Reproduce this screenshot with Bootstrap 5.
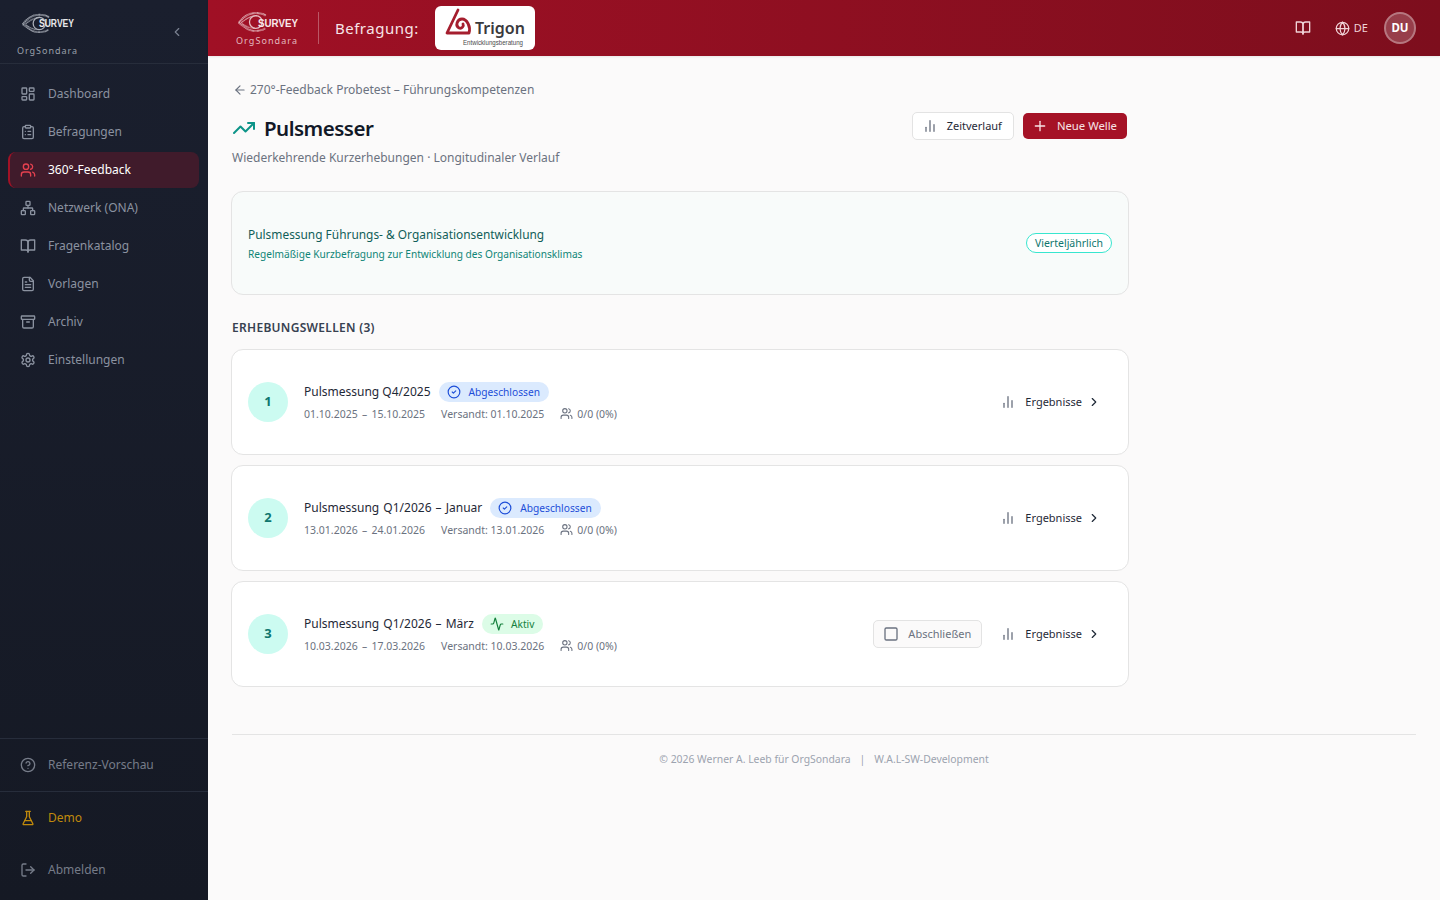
<!DOCTYPE html>
<html lang="de">
<head>
  <meta charset="UTF-8">
  <meta name="viewport" content="width=device-width, initial-scale=1.0">
  <title>Pulsmesser</title>
  <link rel="stylesheet" href="https://cdn.jsdelivr.net/npm/bootstrap@5.3.0/dist/css/bootstrap.min.css">
  <style>
    html, body { height: 100%; }
    body { font-family: "Noto Sans", "Liberation Sans", sans-serif; background: #fbfafa; color: #111827; font-size: 12px; overflow: hidden; }
    .ic { fill: none; stroke: currentColor; stroke-width: 2; stroke-linecap: round; stroke-linejoin: round; flex: none; }
    .app { height: 900px; }

    .sidebar { width: 208px; flex: none; background: linear-gradient(180deg, #1a1f2e, #151924); color: #8b92a0; }
    .side-top { height: 64px; border-bottom: 1px solid #272d3b; padding: 10px 24px 0 16px; }
    .side-top .ic { color: #7a8190; margin-top: 15px; }
    .side-nav { padding: 12px 8px 0; gap: 2px; }
    .side-link { height: 36px; display: flex; align-items: center; gap: 12px; padding: 0 12px; margin-right: 1px; border-radius: 8px; color: #8b92a0; text-decoration: none; font-size: 12px; }
    .side-link.active { background: #401b2b; color: #fff; border-left: 2px solid #a11226; padding-left: 10px; }
    .side-link.active .ic { color: #e5414f; }
    .side-sec { border-top: 1px solid #272d3b; height: 53px; padding: 8px 8px; }
    .side-foot { height: 109px; padding: 8px 8px 0; }
    .side-foot .side-link { height: 36px; margin-bottom: 16px; }
    .side-link.demo { color: #c08a0c; }
    .side-link.muted { color: #767c89; }

    .topbar { height: 56px; background: linear-gradient(90deg, #a01025, #7d0e1d); color: #fff; padding: 0 24px 0 28px; box-shadow: 0 1px 2px rgba(0,0,0,.08); }
    .top-div { width: 1px; height: 32px; background: rgba(255,255,255,.3); margin: 0 16px 0 10px; }
    .top-label { font-size: 15px; letter-spacing: .5px; color: #f6e4e7; margin-right: 16px; }
    .trigon { width: 100px; height: 44px; background: #fff; border-radius: 6px; }
    .top-right { color: #f0d3d7; }
    .lang { font-size: 11px; margin-left: 4px; margin-right: 16px; }
    .avatar { width: 32px; height: 32px; border-radius: 50%; background: rgba(255,255,255,.2); border: 2px solid rgba(255,255,255,.3); font-size: 11.5px; font-weight: 700; color: #fff; }

    .page { padding: 25px 24px 24px; }
    .content { width: 898px; margin-left: -1px; }
    .crumb { color: #6b7280; font-size: 12px; line-height: 18px; padding-left: 2px; gap: 3px; }
    .head { margin-top: 14px; padding-left: 1px; height: 59px; }
    .head h1 { font-size: 20.5px; font-weight: 600; line-height: 30px; margin: 0; color: #111827; letter-spacing: -.5px; }
    .head .teal { color: #0d9488; }
    .head-btns { margin-top: -1px; }
    .sub { color: #6b7280; font-size: 12px; line-height: 18px; margin-top: 6px; }
    .btn-z, .btn-n, .btn-a { display: inline-flex; align-items: center; font-size: 11px; border-radius: 5px; }
    .btn-z { height: 28px; padding: 0 11px 0 9px; gap: 9px; background: #fff; border: 1px solid #e3e3e3; color: #1f2937; }
    .btn-z .ic { color: #6b7280; }
    .btn-n { height: 26px; padding: 0 10px 0 9px; gap: 9px; background: #a51226; border: 0; color: #f8e3e6; margin: 0 2px 0 1px; font-size: 11.3px; }
    .intro { height: 104px; margin-top: 19px; background: #f8fbfa; border: 1px solid #e4e4e4; border-radius: 12px; padding: 0 16px; }
    .intro-t { color: #115e59; font-size: 11.9px; line-height: 18px; padding-top: 1px; }
    .intro-s { color: #0f8577; font-size: 10.15px; line-height: 16px; margin-top: 3px; }
    .tag { border: 1px solid #38e6cf; color: #0f766e; background: #fff; border-radius: 999px; font-size: 10.5px; line-height: 16px; padding: 1px 8px; }
    .sec-title { color: #374151; font-size: 12px; font-weight: 600; line-height: 18px; margin: 24px 0 12px 1px; letter-spacing: .3px; }
    .waves { gap: 10px; }
    .wave { height: 106px; background: #fff; border: 1px solid #e4e4e4; border-radius: 12px; padding: 0 16px; gap: 16px; }
    .num { width: 40px; height: 40px; border-radius: 50%; background: #ccfbf1; color: #0f766e; font-weight: 700; font-size: 13px; flex: none; }
    .w-title { color: #1f2937; font-size: 12px; line-height: 18px; }
    .w-dash { word-spacing: 1px; }
    .pill { border-radius: 999px; font-size: 10.2px; line-height: 14px; padding: 3px 9px 3px 8px; gap: 7px; display: inline-flex; align-items: center; }
    .pill.done { background: #dbeafe; color: #1d4ed8; gap: 8px; }
    .pill.live { background: #dcfce7; color: #15803d; }
    .w-meta { color: #6b7280; font-size: 10.5px; line-height: 14px; margin: 5px 0 2px; gap: 16px; }
    .w-date { word-spacing: 1.5px; }
    .btn-a { height: 28px; padding: 0 10px 0 9px; gap: 9px; background: #fbfafa; border: 1px solid #e3e3e3; color: #6b7280; margin-right: -8px; }
    .btn-r { display: inline-flex; align-items: center; font-size: 11px; color: #1f2937; height: 28px; padding: 0 11px 0 10px; }
    .btn-r .bars { color: #6b7280; margin-right: 9px; }
    .btn-r .chev { margin-left: 5px; }
    .foot { margin-top: 47px; border-top: 1px solid #e4e4e4; padding-top: 16px; color: #9ca3af; font-size: 10.4px; line-height: 16px; gap: 9px; }
  </style>
</head>
<body>
  <svg class="d-none" xmlns="http://www.w3.org/2000/svg">
    <symbol id="i-dash" viewBox="0 0 24 24"><rect x="3" y="3" width="7" height="9" rx="1"/><rect x="14" y="3" width="7" height="5" rx="1"/><rect x="14" y="12" width="7" height="9" rx="1"/><rect x="3" y="16" width="7" height="5" rx="1"/></symbol>
    <symbol id="i-clip" viewBox="0 0 24 24"><rect x="8" y="2" width="8" height="4" rx="1"/><path d="M16 4h2a2 2 0 0 1 2 2v14a2 2 0 0 1-2 2H6a2 2 0 0 1-2-2V6a2 2 0 0 1 2-2h2"/><path d="M12 11h4"/><path d="M12 16h4"/><path d="M8 11h.01"/><path d="M8 16h.01"/></symbol>
    <symbol id="i-users" viewBox="0 0 24 24"><path d="M16 21v-2a4 4 0 0 0-4-4H6a4 4 0 0 0-4 4v2"/><circle cx="9" cy="7" r="4"/><path d="M22 21v-2a4 4 0 0 0-3-3.87"/><path d="M16 3.13a4 4 0 0 1 0 7.75"/></symbol>
    <symbol id="i-net" viewBox="0 0 24 24"><rect x="16" y="16" width="6" height="6" rx="1"/><rect x="2" y="16" width="6" height="6" rx="1"/><rect x="9" y="2" width="6" height="6" rx="1"/><path d="M5 16v-3a1 1 0 0 1 1-1h12a1 1 0 0 1 1 1v3"/><path d="M12 12V8"/></symbol>
    <symbol id="i-book" viewBox="0 0 24 24"><path d="M2 3h6a4 4 0 0 1 4 4v14a3 3 0 0 0-3-3H2z"/><path d="M22 3h-6a4 4 0 0 0-4 4v14a3 3 0 0 1 3-3h7z"/></symbol>
    <symbol id="i-file" viewBox="0 0 24 24"><path d="M15 2H6a2 2 0 0 0-2 2v16a2 2 0 0 0 2 2h12a2 2 0 0 0 2-2V7Z"/><path d="M14 2v4a2 2 0 0 0 2 2h4"/><path d="M10 9H8"/><path d="M16 13H8"/><path d="M16 17H8"/></symbol>
    <symbol id="i-arch" viewBox="0 0 24 24"><rect x="2" y="3" width="20" height="5" rx="1"/><path d="M4 8v11a2 2 0 0 0 2 2h12a2 2 0 0 0 2-2V8"/><path d="M10 12h4"/></symbol>
    <symbol id="i-gear" viewBox="0 0 24 24"><path d="M12.22 2h-.44a2 2 0 0 0-2 2v.18a2 2 0 0 1-1 1.73l-.43.25a2 2 0 0 1-2 0l-.15-.08a2 2 0 0 0-2.73.73l-.22.38a2 2 0 0 0 .73 2.73l.15.1a2 2 0 0 1 1 1.72v.51a2 2 0 0 1-1 1.74l-.15.09a2 2 0 0 0-.73 2.73l.22.38a2 2 0 0 0 2.73.73l.15-.08a2 2 0 0 1 2 0l.43.25a2 2 0 0 1 1 1.73V20a2 2 0 0 0 2 2h.44a2 2 0 0 0 2-2v-.18a2 2 0 0 1 1-1.73l.43-.25a2 2 0 0 1 2 0l.15.08a2 2 0 0 0 2.73-.73l.22-.39a2 2 0 0 0-.73-2.73l-.15-.08a2 2 0 0 1-1-1.74v-.5a2 2 0 0 1 1-1.74l.15-.09a2 2 0 0 0 .73-2.73l-.22-.38a2 2 0 0 0-2.73-.73l-.15.08a2 2 0 0 1-2 0l-.43-.25a2 2 0 0 1-1-1.73V4a2 2 0 0 0-2-2z"/><circle cx="12" cy="12" r="3"/></symbol>
    <symbol id="i-help" viewBox="0 0 24 24"><circle cx="12" cy="12" r="10"/><path d="M9.09 9a3 3 0 0 1 5.83 1c0 2-3 3-3 3"/><path d="M12 17h.01"/></symbol>
    <symbol id="i-flask" viewBox="0 0 24 24"><path d="M10 2v7.527a2 2 0 0 1-.211.896L4.72 20.55a1 1 0 0 0 .9 1.45h12.76a1 1 0 0 0 .9-1.45l-5.069-10.127A2 2 0 0 1 14 9.527V2"/><path d="M8.5 2h7"/><path d="M7 16h10"/></symbol>
    <symbol id="i-out" viewBox="0 0 24 24"><path d="M9 21H5a2 2 0 0 1-2-2V5a2 2 0 0 1 2-2h4"/><path d="m16 17 5-5-5-5"/><path d="M21 12H9"/></symbol>
    <symbol id="i-globe" viewBox="0 0 24 24"><circle cx="12" cy="12" r="10"/><path d="M12 2a14.5 14.5 0 0 0 0 20 14.5 14.5 0 0 0 0-20"/><path d="M2 12h20"/></symbol>
    <symbol id="i-back" viewBox="0 0 24 24"><path d="m12 19-7-7 7-7"/><path d="M19 12H5"/></symbol>
    <symbol id="i-trend" viewBox="0 0 24 24"><path d="M22 7l-8.500 8.500-5-5L2 17"/><path d="M16 7h6v6"/></symbol>
    <symbol id="i-bars" viewBox="0 0 24 24"><path d="M18 20V10"/><path d="M12 20V4"/><path d="M6 20v-6"/></symbol>
    <symbol id="i-plus" viewBox="0 0 24 24"><path d="M5 12h14"/><path d="M12 5v14"/></symbol>
    <symbol id="i-check" viewBox="0 0 24 24"><circle cx="12" cy="12" r="10"/><path d="m9 12 2 2 4-4"/></symbol>
    <symbol id="i-pulse" viewBox="0 0 24 24"><path d="M22 12h-2.480a2 2 0 0 0-1.930 1.460l-2.350 8.360a.25.25 0 0 1-.48 0L9.240 2.180a.25.25 0 0 0-.48 0l-2.350 8.360A2 2 0 0 1 4.490 12H2"/></symbol>
    <symbol id="i-square" viewBox="0 0 24 24"><rect x="3" y="3" width="18" height="18" rx="2"/></symbol>
    <symbol id="i-right" viewBox="0 0 24 24"><path d="m9 18 6-6-6-6"/></symbol>
    <symbol id="i-left" viewBox="0 0 24 24"><path d="m15 18-6-6 6-6"/></symbol>
    <symbol id="logo-eye" viewBox="0 0 40 24">
      <g fill="none" stroke="currentColor">
        <path d="M1 13C7 5 13 1.500 21 1.500c5 0 9 1 12 3" stroke-width="2.400" stroke-dasharray=".9 .5"/>
        <path d="M4 13C9 8 15 5 22 4.500" stroke-width="1.800" stroke-dasharray=".8 .6"/>
        <path d="M1 13c6 4 11 9.500 19 9.500 5 0 9-1 12-3" stroke-width="2.200" stroke-dasharray=".9 .5"/>
        <path d="M5 14c5 3 9 5.500 15 5.500" stroke-width="1.500" stroke-dasharray=".8 .6"/>
        <circle cx="21" cy="12" r="7.500" stroke-width="1.500"/>
      </g>
    </symbol>
  </svg>

  <div class="app d-flex">
    <aside class="sidebar d-flex flex-column">
      <div class="side-top d-flex justify-content-between align-items-start">
        <svg width="72" height="46" viewBox="0 0 72 46">
          <use href="#logo-eye" x="6" y="3" width="33" height="21" color="#aeb3bc"/>
          <text x="23" y="17" textLength="35" lengthAdjust="spacingAndGlyphs" font-family="Liberation Sans, sans-serif" font-size="10.500" font-weight="700" fill="#e8e9ec">SURVEY</text>
          <text x="1" y="44" textLength="60" font-family="Noto Sans, sans-serif" font-size="9" fill="#9aa0ab">OrgSondara</text>
        </svg>
        <svg class="ic" width="14" height="14"><use href="#i-left"/></svg>
      </div>
      <nav class="side-nav d-flex flex-column flex-grow-1">
        <a class="side-link" href="#"><svg class="ic" width="16" height="16"><use href="#i-dash"/></svg>Dashboard</a>
        <a class="side-link" href="#"><svg class="ic" width="16" height="16"><use href="#i-clip"/></svg>Befragungen</a>
        <a class="side-link active" href="#"><svg class="ic" width="16" height="16"><use href="#i-users"/></svg>360°-Feedback</a>
        <a class="side-link" href="#"><svg class="ic" width="16" height="16"><use href="#i-net"/></svg>Netzwerk (ONA)</a>
        <a class="side-link" href="#"><svg class="ic" width="16" height="16"><use href="#i-book"/></svg>Fragenkatalog</a>
        <a class="side-link" href="#"><svg class="ic" width="16" height="16"><use href="#i-file"/></svg>Vorlagen</a>
        <a class="side-link" href="#"><svg class="ic" width="16" height="16"><use href="#i-arch"/></svg>Archiv</a>
        <a class="side-link" href="#"><svg class="ic" width="16" height="16"><use href="#i-gear"/></svg>Einstellungen</a>
      </nav>
      <div class="side-sec">
        <a class="side-link muted" href="#"><svg class="ic" width="16" height="16"><use href="#i-help"/></svg>Referenz-Vorschau</a>
      </div>
      <div class="side-sec side-foot">
        <a class="side-link demo" href="#"><svg class="ic" width="16" height="16"><use href="#i-flask"/></svg>Demo</a>
        <a class="side-link muted" href="#"><svg class="ic" width="16" height="16"><use href="#i-out"/></svg>Abmelden</a>
      </div>
    </aside>

    <div class="flex-grow-1 d-flex flex-column">
      <header class="topbar d-flex align-items-center">
        <svg width="72" height="36" viewBox="0 0 72 36">
          <use href="#logo-eye" x="2" y="1" width="34" height="22" color="#e6bcc2"/>
          <text x="22" y="17" textLength="40" lengthAdjust="spacingAndGlyphs" font-family="Liberation Sans, sans-serif" font-size="11" font-weight="700" fill="#f8e8ea">SURVEY</text>
          <text x="0" y="34" textLength="61" font-family="Noto Sans, sans-serif" font-size="9" fill="#e3b9bf">OrgSondara</text>
        </svg>
        <div class="top-div"></div>
        <span class="top-label">Befragung:</span>
        <div class="trigon d-flex align-items-center justify-content-center">
          <svg width="90" height="40" viewBox="0 0 90 40">
            <path d="M18 2 7 25H29C31 19 27 11 22 11 17 11 15 18 19 20 22 21 24 18 23 16" fill="none" stroke="#a51e2e" stroke-width="2.800" stroke-linejoin="round" stroke-linecap="round"/>
            <text x="35" y="26" font-family="Noto Sans, sans-serif" font-size="16" font-weight="600" fill="#3a3a3c">Trigon</text>
            <text x="23" y="37" textLength="60" lengthAdjust="spacingAndGlyphs" font-family="Liberation Sans, sans-serif" font-size="7" fill="#4b4b4d">Entwicklungsberatung</text>
          </svg>
        </div>
        <div class="top-right ms-auto d-flex align-items-center">
          <svg class="ic me-4" width="16" height="16"><use href="#i-book"/></svg>
          <svg class="ic" width="15" height="15"><use href="#i-globe"/></svg>
          <span class="lang">DE</span>
          <div class="avatar d-flex align-items-center justify-content-center">DU</div>
        </div>
      </header>

      <main class="page flex-grow-1">
        <div class="content">
          <div class="crumb d-flex align-items-center"><svg class="ic" width="14" height="14"><use href="#i-back"/></svg>270°-Feedback Probetest – Führungskompetenzen</div>
          <div class="head d-flex justify-content-between align-items-start">
            <div>
              <div class="d-flex align-items-center gap-2"><svg class="ic teal" width="24" height="24"><use href="#i-trend"/></svg><h1>Pulsmesser</h1></div>
              <div class="sub">Wiederkehrende Kurzerhebungen · Longitudinaler Verlauf</div>
            </div>
            <div class="head-btns d-flex align-items-center gap-2">
              <button class="btn-z" type="button"><svg class="ic" width="16" height="16"><use href="#i-bars"/></svg>Zeitverlauf</button>
              <button class="btn-n" type="button"><svg class="ic" width="16" height="16"><use href="#i-plus"/></svg>Neue Welle</button>
            </div>
          </div>

          <div class="intro d-flex align-items-center justify-content-between">
            <div>
              <div class="intro-t">Pulsmessung Führungs- &amp; Organisationsentwicklung</div>
              <div class="intro-s">Regelmäßige Kurzbefragung zur Entwicklung des Organisationsklimas</div>
            </div>
            <span class="tag">Vierteljährlich</span>
          </div>

          <div class="sec-title">ERHEBUNGSWELLEN (3)</div>

          <div class="waves d-flex flex-column">
            <div class="wave d-flex align-items-center">
              <div class="num d-flex align-items-center justify-content-center">1</div>
              <div class="flex-grow-1">
                <div class="d-flex align-items-center gap-2"><span class="w-title">Pulsmessung Q4/2025</span><span class="pill done"><svg class="ic" width="14" height="14"><use href="#i-check"/></svg>Abgeschlossen</span></div>
                <div class="w-meta d-flex"><span class="w-date">01.10.2025 – 15.10.2025</span><span>Versandt: 01.10.2025</span><span class="d-flex align-items-center gap-1"><svg class="ic" width="13" height="13"><use href="#i-users"/></svg>0/0 (0%)</span></div>
              </div>
              <a class="btn-r text-decoration-none"><svg class="ic bars" width="16" height="16"><use href="#i-bars"/></svg>Ergebnisse<svg class="ic chev" width="14" height="14"><use href="#i-right"/></svg></a>
            </div>
            <div class="wave d-flex align-items-center">
              <div class="num d-flex align-items-center justify-content-center">2</div>
              <div class="flex-grow-1">
                <div class="d-flex align-items-center gap-2"><span class="w-title w-dash">Pulsmessung Q1/2026 – Januar</span><span class="pill done"><svg class="ic" width="14" height="14"><use href="#i-check"/></svg>Abgeschlossen</span></div>
                <div class="w-meta d-flex"><span class="w-date">13.01.2026 – 24.01.2026</span><span>Versandt: 13.01.2026</span><span class="d-flex align-items-center gap-1"><svg class="ic" width="13" height="13"><use href="#i-users"/></svg>0/0 (0%)</span></div>
              </div>
              <a class="btn-r text-decoration-none"><svg class="ic bars" width="16" height="16"><use href="#i-bars"/></svg>Ergebnisse<svg class="ic chev" width="14" height="14"><use href="#i-right"/></svg></a>
            </div>
            <div class="wave d-flex align-items-center">
              <div class="num d-flex align-items-center justify-content-center">3</div>
              <div class="flex-grow-1">
                <div class="d-flex align-items-center gap-2"><span class="w-title w-dash">Pulsmessung Q1/2026 – März</span><span class="pill live"><svg class="ic" width="14" height="14"><use href="#i-pulse"/></svg>Aktiv</span></div>
                <div class="w-meta d-flex"><span class="w-date">10.03.2026 – 17.03.2026</span><span>Versandt: 10.03.2026</span><span class="d-flex align-items-center gap-1"><svg class="ic" width="13" height="13"><use href="#i-users"/></svg>0/0 (0%)</span></div>
              </div>
              <button class="btn-a" type="button"><svg class="ic" width="16" height="16"><use href="#i-square"/></svg>Abschließen</button>
              <a class="btn-r text-decoration-none"><svg class="ic bars" width="16" height="16"><use href="#i-bars"/></svg>Ergebnisse<svg class="ic chev" width="14" height="14"><use href="#i-right"/></svg></a>
            </div>
          </div>
        </div>
        <footer class="foot d-flex justify-content-center"><span>© 2026 Werner A. Leeb für OrgSondara</span><span>|</span><span>W.A.L-SW-Development</span></footer>
      </main>
    </div>
  </div>
  <script src="https://cdn.jsdelivr.net/npm/bootstrap@5.3.0/dist/js/bootstrap.bundle.min.js"></script>
</body>
</html>
